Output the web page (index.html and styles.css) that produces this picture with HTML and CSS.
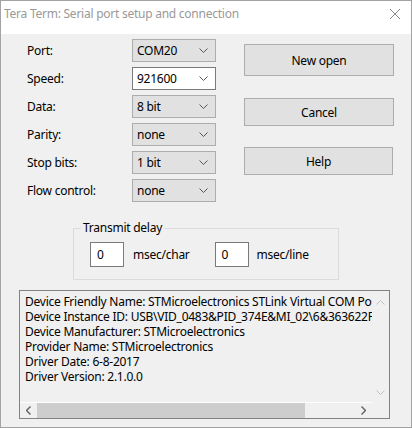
FILE: index.html
```html
<!DOCTYPE html>
<html>
<head>
<meta charset="utf-8">
<link rel="stylesheet" href="styles.css">
</head>
<body>
<div class="window">
  <div class="titlebar">
    <span class="title">Tera Term: Serial port setup and connection</span>
    <svg class="close" width="12" height="12" viewBox="0 0 12 12"><path d="M1 1 L11 11 M11 1 L1 11" stroke="#8a8a8a" stroke-width="1" fill="none"/></svg>
  </div>
  <div class="content">
    <div class="top">
      <div class="form">
        <span class="label">Port:</span>
        <div class="combo"><span>COM20</span><svg class="chev" width="9" height="5" viewBox="0 0 9 5"><path d="M0.5 0.5 L4.5 4.5 L8.5 0.5" stroke="#555" fill="none"/></svg></div>
        <span class="label">Speed:</span>
        <div class="combo edit"><span>921600</span><svg class="chev" width="9" height="5" viewBox="0 0 9 5"><path d="M0.5 0.5 L4.5 4.5 L8.5 0.5" stroke="#555" fill="none"/></svg></div>
        <span class="label">Data:</span>
        <div class="combo"><span>8 bit</span><svg class="chev" width="9" height="5" viewBox="0 0 9 5"><path d="M0.5 0.5 L4.5 4.5 L8.5 0.5" stroke="#555" fill="none"/></svg></div>
        <span class="label">Parity:</span>
        <div class="combo"><span>none</span><svg class="chev" width="9" height="5" viewBox="0 0 9 5"><path d="M0.5 0.5 L4.5 4.5 L8.5 0.5" stroke="#555" fill="none"/></svg></div>
        <span class="label">Stop bits:</span>
        <div class="combo"><span>1 bit</span><svg class="chev" width="9" height="5" viewBox="0 0 9 5"><path d="M0.5 0.5 L4.5 4.5 L8.5 0.5" stroke="#555" fill="none"/></svg></div>
        <span class="label">Flow control:</span>
        <div class="combo"><span>none</span><svg class="chev" width="9" height="5" viewBox="0 0 9 5"><path d="M0.5 0.5 L4.5 4.5 L8.5 0.5" stroke="#555" fill="none"/></svg></div>
      </div>
      <div class="buttons">
        <div class="btn btn-tall">New open</div>
        <div class="btn btn-cancel">Cancel</div>
        <div class="btn btn-help">Help</div>
      </div>
    </div>
    <div class="group">
      <span class="group-title">Transmit delay</span>
      <div class="delay-row">
        <div class="num">0</div><span class="unit">msec/char</span>
        <div class="num num2">0</div><span class="unit unit2">msec/line</span>
      </div>
    </div>
    <div class="listbox">
      <div class="list-main">
        <div class="list-text">
          <div>Device Friendly Name: STMicroelectronics STLink Virtual COM Port (COM20)</div>
          <div>Device Instance ID: USB\VID_0483&amp;PID_374E&amp;MI_02\6&amp;363622FE&amp;0&amp;0002</div>
          <div>Device Manufacturer: STMicroelectronics</div>
          <div>Provider Name: STMicroelectronics</div>
          <div>Driver Date: 6-8-2017</div>
          <div>Driver Version: 2.1.0.0</div>
        </div>
        <div class="vscroll">
          <svg width="9" height="5" viewBox="0 0 9 5"><path d="M0.5 4.5 L4.5 0.5 L8.5 4.5" stroke="#c2c2c2" fill="none"/></svg>
          <svg width="9" height="5" viewBox="0 0 9 5"><path d="M0.5 0.5 L4.5 4.5 L8.5 0.5" stroke="#c2c2c2" fill="none"/></svg>
        </div>
      </div>
      <div class="hrow">
        <div class="hscroll">
          <svg class="harrow" width="5" height="9" viewBox="0 0 5 9"><path d="M4.5 0.5 L0.5 4.5 L4.5 8.5" stroke="#606060" stroke-width="1.4" fill="none"/></svg>
          <div class="htrack"><div class="hthumb"></div></div>
          <svg class="harrow" width="5" height="9" viewBox="0 0 5 9"><path d="M0.5 0.5 L4.5 4.5 L0.5 8.5" stroke="#606060" stroke-width="1.4" fill="none"/></svg>
        </div>
        <div class="corner"></div>
      </div>
    </div>
  </div>
</div>
</body>
</html>
```

FILE: styles.css
```css
* { box-sizing: border-box; }
html, body { margin: 0; padding: 0; background: #f0f0f0; }
body { font-family: "Noto Sans", "Open Sans", sans-serif; font-size: 12px; letter-spacing: -0.25px; color: #000; }

.window {
  width: 412px;
  height: 428px;
  border: 1px solid #a3a3a3;
  background: #f0f0f0;
  display: flex;
  flex-direction: column;
}

.titlebar {
  height: 33px;
  background: #fff;
  display: flex;
  align-items: center;
  justify-content: space-between;
  padding: 0 10px 8px 3px;
  flex-shrink: 0;
}
.title { color: #999; font-size: 12px; }
.close { display: block; margin-top: 1px; }

.content {
  padding: 5px 0 0 18px;
  display: flex;
  flex-direction: column;
}

.top { display: flex; }

.form {
  display: grid;
  grid-template-columns: 105px 84px;
  grid-auto-rows: 23px;
  row-gap: 5px;
  padding-left: 8px;
  align-items: center;
}
.label { line-height: 23px; }

.combo {
  height: 23px;
  background: #e1e1e1;
  border: 1px solid #adadad;
  display: flex;
  align-items: center;
  justify-content: space-between;
  padding: 0 7px 0 4px;
}
.combo.edit { background: #fff; border-color: #7a7a7a; }
.chev { display: block; }

.buttons {
  margin-left: 28px;
  display: flex;
  flex-direction: column;
  padding-top: 5px;
}
.btn {
  width: 150px;
  background: #e1e1e1;
  border: 1px solid #adadad;
  display: flex;
  align-items: center;
  justify-content: center;
}
.btn-tall { height: 32px; }
.btn-cancel { height: 28px; margin-top: 22px; }
.btn-help { height: 28px; margin-top: 21px; width: 149px; }

.group {
  margin: 26px 0 0 54px;
  width: 266px;
  height: 52px;
  border: 1px solid #dcdcdc;
  padding: 0 0 0 16px;
  display: flex;
  flex-direction: column;
  align-items: flex-start;
}
.group-title {
  margin: -9px 0 0 -9px;
  padding: 0 2px;
  line-height: 16px;
  background: #f0f0f0;
}
.delay-row {
  display: flex;
  align-items: center;
  margin-top: 6px;
}
.num {
  width: 34px;
  height: 25px;
  background: #fff;
  border: 1px solid #7a7a7a;
  padding-left: 6px;
  line-height: 23px;
}
.num2 { margin-left: 25px; }
.unit { margin-left: 9px; }
.unit.unit2 { margin-left: 8px; }

.listbox {
  margin-top: 10px;
  width: 371px;
  height: 129px;
  border: 1px solid #828282;
  display: flex;
  flex-direction: column;
}
.list-main { display: flex; flex: 1; min-height: 0; }
.list-text {
  flex: 1;
  overflow: hidden;
  white-space: nowrap;
  padding: 3px 0 0 5px;
  line-height: 15px;
  background: #f0f0f0;
}
.vscroll {
  width: 17px;
  display: flex;
  flex-direction: column;
  justify-content: space-between;
  align-items: center;
  padding: 9px 0 7px 0;
  background: #f0f0f0;
}
.vscroll svg { display: block; }

.hrow { display: flex; height: 16px; }
.hscroll {
  flex: 1;
  display: flex;
  align-items: center;
  background: #f0f0f0;
  border-top: 1px solid #fff;
}
.harrow { display: block; margin: 0 6px 0 6px; }
.htrack { flex: 1; height: 15px; }
.hthumb { width: 268px; height: 15px; background: #cdcdcd; }
.corner { width: 17px; background: #f0f0f0; }
```
